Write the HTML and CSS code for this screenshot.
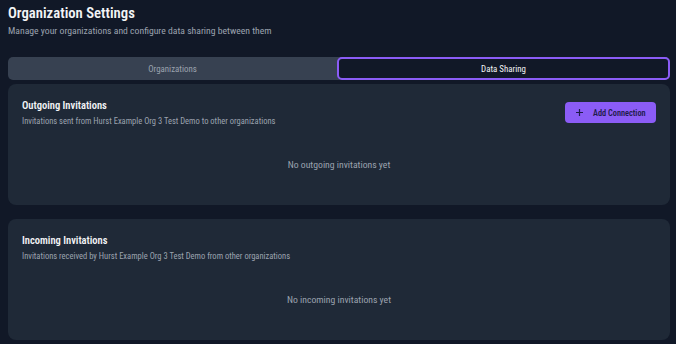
FILE: index.html
```html
<!DOCTYPE html>
<html>
<head>
<title>Organization Settings</title>
<link rel="stylesheet" href="styles.css">
</head>
<body>
<div class="page">
  <h1>Organization Settings</h1>
  <p class="lead">Manage your organizations and configure data sharing between them</p>

  <div class="tabs">
    <button class="tab">Organizations</button>
    <button class="tab active">Data Sharing</button>
  </div>

  <div class="card">
    <div class="card-head">
      <div>
        <h2>Outgoing Invitations</h2>
        <p class="desc">Invitations sent from Hurst Example Org 3 Test Demo to other organizations</p>
      </div>
      <button class="add-btn">
        <svg width="7" height="7" viewBox="0 0 7 7"><path d="M3.5 0v7M0 3.5h7" stroke="currentColor" stroke-width="1.2" fill="none"/></svg>
        <span>Add Connection</span>
      </button>
    </div>
    <div class="empty">No outgoing invitations yet</div>
  </div>

  <div class="card">
    <div class="card-head">
      <div>
        <h2>Incoming Invitations</h2>
        <p class="desc">Invitations received by Hurst Example Org 3 Test Demo from other organizations</p>
      </div>
    </div>
    <div class="empty">No incoming invitations yet</div>
  </div>
</div>
</body>
</html>
```

FILE: styles.css
```css
body {
  margin: 0;
  padding: 0;
  background-color: #111827;
  font-family: "Roboto Condensed", Roboto, sans-serif;
  font-stretch: condensed;
  color: #f3f4f6;
}

.page {
  padding: 3px 6px 0 8px;
}

h1 {
  margin: 0;
  font-size: 14.7px;
  font-weight: 600;
  line-height: 20px;
}

.lead {
  margin: 0;
  font-size: 9.7px;
  line-height: 16px;
  color: #9ca3af;
}

.tabs {
  margin-top: 18px;
  display: flex;
  background-color: #374151;
  border-radius: 5px;
  height: 23px;
}

.tab {
  flex: 1;
  border: none;
  background: none;
  font-family: inherit;
  font-stretch: inherit;
  font-size: 8.9px;
  color: #9ca3af;
  border-radius: 5px;
  padding: 0;
}

.tab.active {
  background-color: #111827;
  border: 2px solid #8b5cf6;
  color: #f3f4f6;
}

.card {
  margin-top: 4px;
  margin-bottom: 14px;
  background-color: #1f2937;
  border-radius: 8px;
  height: 121px;
  padding: 14px 14px 0;
  box-sizing: border-box;
}

.card-head {
  display: flex;
  justify-content: space-between;
  align-items: flex-start;
}

h2 {
  margin: 0;
  font-size: 10.5px;
  font-weight: 600;
  line-height: 16px;
}

.desc {
  margin: 0;
  font-size: 8.5px;
  line-height: 14px;
  color: #9ca3af;
}

.add-btn {
  margin-top: 4px;
  display: flex;
  align-items: center;
  gap: 10px;
  height: 21px;
  width: 91px;
  padding: 0 0 0 11px;
  background-color: #8b5cf6;
  color: #1e1b4b;
  border: none;
  border-radius: 4px;
  font-family: inherit;
  font-stretch: inherit;
  font-size: 8.3px;
  font-weight: 600;
}

.empty {
  margin-top: 29px;
  text-align: center;
  font-size: 9.7px;
  line-height: 16px;
  color: #9ca3af;
}
```
